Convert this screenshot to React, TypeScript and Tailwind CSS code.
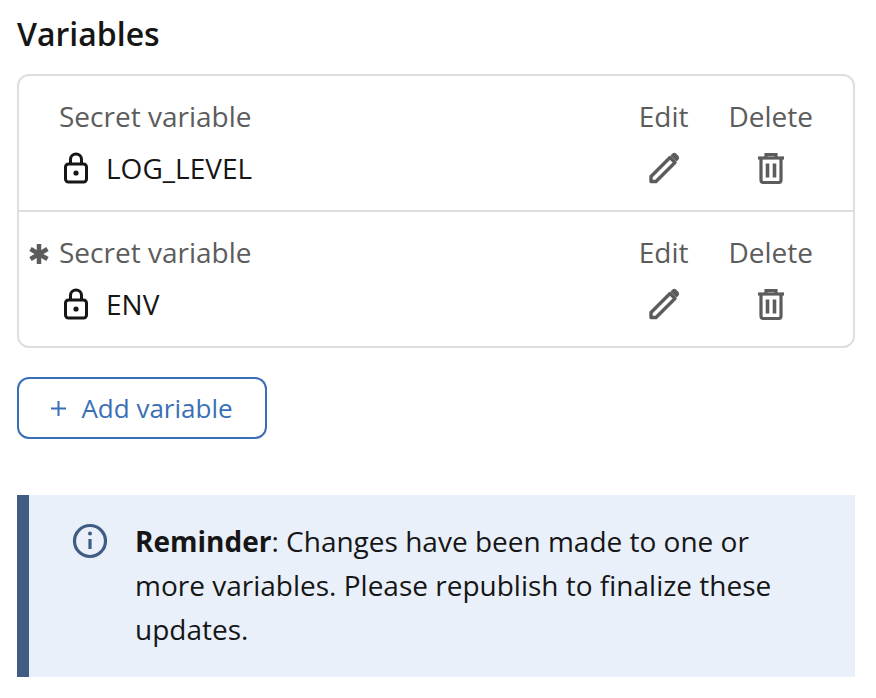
import React from 'react';

function LockIcon() {
  return (
    <svg width="26" height="32" viewBox="0 0 26 32" fill="none" stroke="#161616" strokeWidth="3" className="shrink-0">
      <rect x="2.500" y="12" width="21" height="18" rx="3" />
      <path d="M7.500 12V7.500a5.500 5.500 0 0 1 11 0V12" />
      <circle cx="13" cy="21" r="2.600" fill="#161616" stroke="none" />
    </svg>
  );
}

function PencilIcon() {
  return (
    <svg width="32" height="32" viewBox="0 0 32 32" fill="none" stroke="#5c5c5c" strokeWidth="3.400" strokeLinejoin="round">
      <path d="M3 24.500 22 5.500l5 5-19 19H3z" />
      <path d="M23.500 3.500l1-1a2.500 2.500 0 0 1 3.500 0l1.500 1.500a2.500 2.500 0 0 1 0 3.500l-1 1z" fill="#5c5c5c" strokeWidth="1.500" />
    </svg>
  );
}

function TrashIcon() {
  return (
    <svg width="28" height="32" viewBox="0 0 28 32" fill="none" stroke="#5c5c5c" strokeWidth="3.200">
      <path d="M1 6h26" />
      <path d="M9 5V2.500h10V5" />
      <path d="M4 7v21a2.500 2.500 0 0 0 2.500 2.500h15A2.500 2.500 0 0 0 24 28V7" />
      <path d="M10.500 11.500v14M17.500 11.500v14" strokeWidth="3.600" />
    </svg>
  );
}

function AsteriskIcon() {
  return (
    <svg width="20" height="20" viewBox="0 0 20 20" stroke="#5c5c5c" strokeWidth="4.500" className="absolute left-[-30px] top-[10px]">
      <path d="M10 0v20M1.500 5l17 10M1.500 15l17-10" />
    </svg>
  );
}

function VariableRow({ name, edited }: { name: string; edited?: boolean }) {
  return (
    <div className="flex pt-[22px] pb-[24px] pl-[40px] pr-[40px] justify-between">
      <div>
        <div className="relative text-[28px] leading-[36px] text-[#5c5c5c]">
          {edited && <AsteriskIcon />}
          Secret variable
        </div>
        <div className="mt-[16px] flex items-center gap-[17px] pl-[4px] text-[28px] leading-[36px] text-[#161616]">
          <LockIcon />
          <span>{name}</span>
        </div>
      </div>
      <div className="flex gap-[40px] text-[28px] leading-[36px] text-[#5c5c5c]">
        <div className="flex flex-col items-center">
          <span>Edit</span>
          <span className="mt-[18px] flex"><PencilIcon /></span>
        </div>
        <div className="flex flex-col items-center">
          <span>Delete</span>
          <span className="mt-[18px] flex"><TrashIcon /></span>
        </div>
      </div>
    </div>
  );
}

export default function App() {
  return (
    <div className="w-[876px] h-[698px] overflow-hidden bg-white px-[17px] pt-[14px] font-['Open_Sans','Noto_Sans',sans-serif]">
      <h2 className="text-[32px] leading-[40px] font-semibold text-[#161616]">Variables</h2>

      <div className="mt-[20px] w-[838px] rounded-[12px] border-2 border-[#dedede] divide-y-2 divide-[#dedede]">
        <VariableRow name="LOG_LEVEL" />
        <VariableRow name="ENV" edited />
      </div>

      <button className="mt-[29px] flex h-[62px] w-[250px] items-center justify-center gap-[15px] rounded-[12px] border-2 border-[#3a6fb7] text-[26px] text-[#3a6fb7]">
        <svg width="15" height="15" viewBox="0 0 15 15" stroke="#3a6fb7" strokeWidth="2">
          <path d="M7.500 0v15M0 7.500h15" />
        </svg>
        Add variable
      </button>

      <div className="mt-[56px] flex h-[182px] w-[838px] border-l-[12px] border-[#3e5c84] bg-[#e9f0fa] pl-[43px] pr-[65px] pt-[24px]">
        <svg width="36" height="36" viewBox="0 0 36 36" fill="none" stroke="#3e5c84" strokeWidth="3.200" className="mt-[4px] shrink-0">
          <circle cx="18" cy="18" r="15.500" />
          <path d="M18 16v10" />
          <circle cx="18" cy="10.500" r="2" fill="#3e5c84" stroke="none" />
        </svg>
        <p className="ml-[27px] text-[28px] leading-[44px] text-[#161616]">
          <b className="font-bold">Reminder</b>: Changes have been made to one or more variables. Please republish to finalize these updates.
        </p>
      </div>
    </div>
  );
}
